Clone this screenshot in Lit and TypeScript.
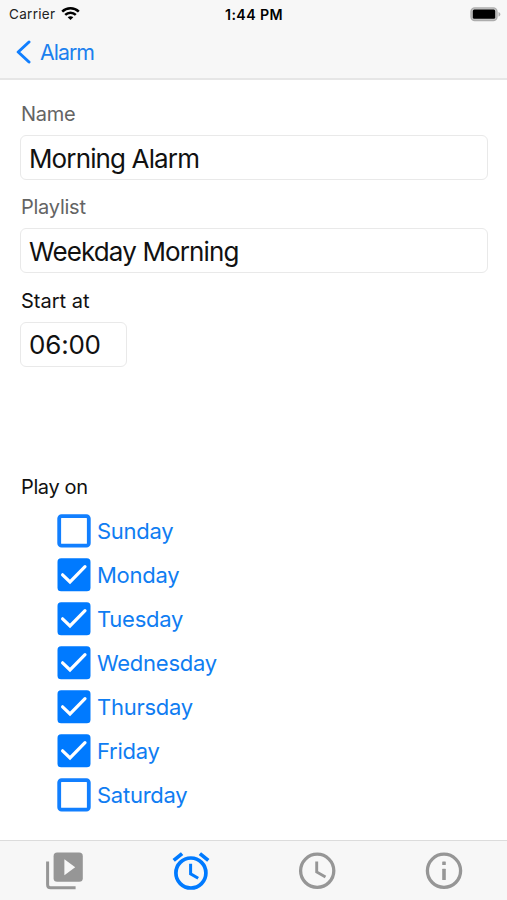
import { LitElement, html, css, svg } from "lit";
import { customElement, property } from "lit/decorators.js";

@customElement("status-bar")
class StatusBar extends LitElement {
  static styles = css`
    :host { display: grid; grid-template-columns: 1fr auto 1fr; align-items: center; height: 27px; padding: 0 6px 0 9px; font-size: 13.5px; line-height: 27px; color: #222; }
    .left { display: flex; align-items: center; gap: 6px; }
    .carrier { letter-spacing: 0.3px; padding-top: 1px; }
    .time { font-weight: 600; font-size: 14.2px; color: #000; letter-spacing: 0.38px; padding-right: 2px; }
    .right { display: flex; justify-content: flex-end; }
    svg { display: block; }
  `;
  render() {
    return html`
      <div class="left">
        <span class="carrier">Carrier</span>
        <svg width="19" height="14" viewBox="0 0 19 14" fill="none" stroke="#000" stroke-width="2.5">
          <path d="M1.2 4.7C5.8 .2 13.2 .2 17.8 4.7" />
          <path d="M4.2 7.8C7.2 4.9 11.8 4.9 14.8 7.8" />
          <path d="M9.5 13.1L6.7 10.3C8.3 8.8 10.7 8.8 12.3 10.3Z" fill="#000" stroke="none" />
        </svg>
      </div>
      <div class="time">1:44 PM</div>
      <div class="right">
        <svg width="31" height="15" viewBox="0 0 31 15">
          <rect x="1" y="0.9" width="26" height="12.6" rx="3.8" fill="#c4c4c4" stroke="#adadad" stroke-width="1.4" />
          <rect x="2.8" y="2.6" width="22.4" height="9.2" rx="1.5" fill="#000" />
          <path d="M28.5 4.9C31 5.9 31 8.5 28.5 9.5Z" fill="#adadad" />
        </svg>
      </div>`;
  }
}

@customElement("text-field")
class TextField extends LitElement {
  @property() label = "";
  @property() value = "";
  static styles = css`
    :host { display: block; height: 93.3px; }
    .label { height: 33px; line-height: 24px; font-size: 20px; padding-left: 1px; letter-spacing: var(--label-spacing, 0); color: var(--label-color, #646464); }
    .box { box-sizing: border-box; width: var(--box-width, 468px); height: 45px; border: 1px solid #e9e9e9; border-radius: 6px; padding-left: 8px; line-height: var(--value-line, 46px); font-size: 26px; letter-spacing: var(--value-spacing, 0); color: #111; background: #fff; }
  `;
  render() {
    return html`<div class="label">${this.label}</div><div class="box">${this.value}</div>`;
  }
}

@customElement("day-option")
class DayOption extends LitElement {
  @property() name = "";
  @property({ type: Boolean }) checked = false;
  static styles = css`
    :host { display: flex; align-items: center; gap: 6px; height: 44px; color: #0f7df2; font-size: 22px; }
    svg { display: block; flex: none; }
    .name { line-height: 30px; letter-spacing: -0.26px; }
  `;
  render() {
    return html`
      <svg width="34" height="34" viewBox="0 0 34 34">
        ${this.checked
          ? svg`<rect x="0.5" y="0.3" width="33" height="33" rx="3.6" fill="#007aff" /><path d="M5.6 16.8L13 23.9L28 8.7" fill="none" stroke="#fff" stroke-width="3.2" stroke-linecap="round" />`
          : svg`<rect x="2.2" y="2.1" width="29.6" height="29.6" rx="2.4" fill="#fff" stroke="#117fff" stroke-width="3.8" />`}
      </svg>
      <span class="name">${this.name}</span>`;
  }
}

const tabs = [
  svg`<path d="M3.6 9.5V32.7Q3.6 35.7 6.6 35.7H31.6" fill="none" stroke="#969696" stroke-width="3" /><rect x="9.6" y="0.6" width="29.2" height="29.2" rx="3.6" fill="#969696" /><path d="M20.4 7.2L31.2 15.2L20.4 23.2Z" fill="#f7f7f7" />`,
  svg`<g fill="none" stroke="#007aff" stroke-width="3.7"><circle cx="19.9" cy="21" r="15" /><path d="M2.7 8.4L11.1 1.6M37.3 8.4L28.9 1.6" /><path d="M19.6 11.8V21.8L27.2 26.2" stroke-width="3" /></g>`,
  svg`<g fill="none" stroke="#969696"><circle cx="20.2" cy="18.8" r="16.6" stroke-width="3.3" /><path d="M19.7 9.4V20L28.5 25" stroke-width="2.9" /></g>`,
  svg`<circle cx="20" cy="18.8" r="16.6" fill="none" stroke="#969696" stroke-width="3.3" /><rect x="18.2" y="9.4" width="3.6" height="3.6" rx="0.6" fill="#969696" /><rect x="18.2" y="16.8" width="3.6" height="11.3" rx="0.5" fill="#969696" />`,
];

@customElement("app-root")
class AppRoot extends LitElement {
  static styles = css`
    :host { display: flex; flex-direction: column; box-sizing: border-box; width: 507px; height: 900px; background: #fff; font-family: Inter, "Liberation Sans", sans-serif; overflow: hidden; }
    .top { box-sizing: border-box; height: 80px; background: #f7f7f7; border-bottom: 2px solid #e6e6e6; }
    .back { display: flex; align-items: center; gap: 8px; height: 50px; padding-left: 16px; color: #1b80ee; font-size: 21.3px; letter-spacing: -0.95px; }
    .back svg { display: block; }
    .content { flex: 1; padding: 22px 19px 0 20px; }
    .name { --label-spacing: -0.3px; --value-spacing: -0.87px; }
    .playlist { --label-spacing: -0.25px; --value-spacing: -0.87px; }
    .start { --label-color: #111; --box-width: 107px; --value-spacing: -0.2px; --value-line: 44px; }
    .play { padding: 93px 0 0 1px; height: 24px; line-height: 24px; font-size: 20px; letter-spacing: -0.38px; color: #111; }
    .days { padding: 10px 0 0 37px; }
    .tabs { box-sizing: border-box; display: grid; grid-template-columns: repeat(4, 1fr); justify-items: center; height: 60px; padding-top: 11px; background: #f7f7f7; border-top: 1px solid #dcdcdc; }
    .tabs svg { display: block; }
  `;
  render() {
    const days: [string, boolean][] = [["Sunday", false], ["Monday", true], ["Tuesday", true], ["Wednesday", true], ["Thursday", true], ["Friday", true], ["Saturday", false]];
    return html`
      <header class="top">
        <status-bar></status-bar>
        <div class="back">
          <svg width="16" height="24" viewBox="0 0 16 24"><path d="M13 2L2.2 12L13 22" fill="none" stroke="#117fff" stroke-width="3" stroke-linecap="round" stroke-linejoin="round" /></svg>
          <span>Alarm</span>
        </div>
      </header>
      <main class="content">
        <text-field class="name" label="Name" value="Morning Alarm"></text-field>
        <text-field class="playlist" label="Playlist" value="Weekday Morning"></text-field>
        <text-field class="start" label="Start at" value="06:00"></text-field>
        <div class="play">Play on</div>
        <div class="days">${days.map(([n, c]) => html`<day-option .name=${n} .checked=${c}></day-option>`)}</div>
      </main>
      <nav class="tabs">${tabs.map((art) => html`<svg width="39" height="38" viewBox="0 0 39 38">${art}</svg>`)}</nav>`;
  }
}
